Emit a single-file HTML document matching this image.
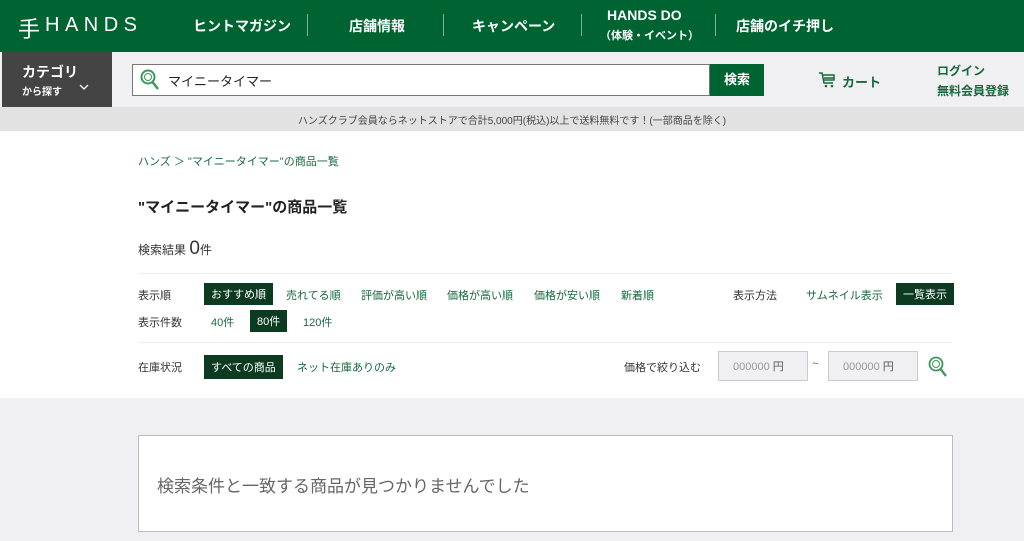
<!DOCTYPE html>
<html><head><meta charset="utf-8"><style>
*{margin:0;padding:0;box-sizing:border-box}
body{width:1024px;height:541px;overflow:hidden;font-family:"Liberation Sans","Noto Sans CJK JP",sans-serif;background:#f0f0f2;position:relative;color:#333}
.a{position:absolute;white-space:nowrap}
.hd{left:0;top:0;width:1024px;height:52px;background:#006432}
.nav{color:#fff;font-size:14px;font-weight:bold}
.sep{width:1px;height:22px;background:#7fb197;top:14px}
.bar2{left:0;top:52px;width:1024px;height:55px;background:#f0f0f2}
.g{color:#16693d;font-size:11px}
.chip{background:#0c3b22;color:#fff;font-size:11px;padding:0 7px;height:22px;line-height:24px}
.lb{font-size:11px;color:#333}
</style></head><body>
<div class="a hd"></div>
<div class="a" style="left:18px;top:12px;color:#fff;font-size:22px;font-family:'Liberation Serif',serif">&#x624B;</div>
<div class="a" style="left:45px;top:14px;color:#fff;font-size:20px;letter-spacing:5.5px">HANDS</div>
<div class="a nav" style="left:193px;top:16px">ヒントマガジン</div>
<div class="a sep" style="left:307px"></div>
<div class="a nav" style="left:349px;top:16px">店舗情報</div>
<div class="a sep" style="left:443px"></div>
<div class="a nav" style="left:472px;top:16px">キャンペーン</div>
<div class="a sep" style="left:581px"></div>
<div class="a nav" style="left:607px;top:7px">HANDS DO</div>
<div class="a" style="left:600px;top:27px;color:#fff;font-size:11px;font-weight:bold">（体験・イベント）</div>
<div class="a sep" style="left:715px"></div>
<div class="a nav" style="left:736px;top:16px">店舗のイチ押し</div>
<div class="a bar2"></div>
<div class="a" style="left:2px;top:52px;width:110px;height:55px;background:#444"></div>
<div class="a" style="left:22px;top:62px;color:#fff;font-size:14px;font-weight:bold">カテゴリ</div>
<div class="a" style="left:22px;top:83px;color:#fff;font-size:10px;font-weight:bold">から探す</div>
<svg class="a" style="left:79px;top:83px" width="10" height="8" viewBox="0 0 10 8"><path d="M1 2l4 4 4-4" fill="none" stroke="#fff" stroke-width="1.3"/></svg>
<div class="a" style="left:132px;top:64px;width:578px;height:32px;background:#fff;border:1px solid #777"></div>
<svg class="a" style="left:139px;top:68px" width="22" height="24" viewBox="0 0 22 24"><circle cx="9" cy="9" r="6.5" fill="none" stroke="#3a9a5a" stroke-width="2"/><circle cx="9" cy="9" r="3.5" fill="none" stroke="#3a9a5a" stroke-width="1"/><line x1="13.5" y1="14" x2="19" y2="21" stroke="#3a9a5a" stroke-width="2.5"/></svg>
<div class="a" style="left:168px;top:71px;font-size:13px;color:#222">マイニータイマー</div>
<div class="a" style="left:710px;top:64px;width:54px;height:32px;background:#006432;color:#fff;font-size:13px;font-weight:bold;text-align:center;line-height:32px">検索</div>
<svg class="a" style="left:818px;top:71px" width="18" height="18" viewBox="0 0 18 18"><path d="M1 2h3l2 10h9M5 4h11v5H6M6 7h10" fill="none" stroke="#16693d" stroke-width="1.5"/><circle cx="8" cy="15" r="1.3" fill="#16693d"/><circle cx="14" cy="15" r="1.3" fill="#16693d"/></svg>
<div class="a" style="left:842px;top:72px;font-size:13px;font-weight:bold;color:#16693d">カート</div>
<div class="a" style="left:937px;top:62px;font-size:12px;font-weight:bold;color:#16693d">ログイン</div>
<div class="a" style="left:937px;top:82px;font-size:12px;font-weight:bold;color:#16693d">無料会員登録</div>
<div class="a" style="left:0;top:107px;width:1024px;height:24px;background:#e2e2e2"></div>
<div class="a" style="left:0;top:112px;width:1024px;text-align:center;font-size:10px;color:#444">ハンズクラブ会員ならネットストアで合計5,000円(税込)以上で送料無料です！(一部商品を除く)</div>
<div class="a" style="left:0;top:131px;width:1024px;height:267px;background:#fff"></div>
<div class="a g" style="left:138px;top:153px">ハンズ ＞ "マイニータイマー"の商品一覧</div>
<div class="a" style="left:138px;top:196px;font-size:15px;font-weight:bold;color:#222">"マイニータイマー"の商品一覧</div>
<div class="a" style="left:138px;top:238px;font-size:12px">検索結果 <span style="font-size:19px">0</span>件</div>
<div class="a" style="left:138px;top:273px;width:814px;height:1px;background:#eee"></div>
<div class="a lb" style="left:138px;top:287px">表示順</div>
<div class="a chip" style="left:204px;top:283px">おすすめ順</div>
<div class="a g" style="left:286px;top:287px">売れてる順</div>
<div class="a g" style="left:361px;top:287px">評価が高い順</div>
<div class="a g" style="left:447px;top:287px">価格が高い順</div>
<div class="a g" style="left:534px;top:287px">価格が安い順</div>
<div class="a g" style="left:621px;top:287px">新着順</div>
<div class="a lb" style="left:733px;top:287px">表示方法</div>
<div class="a g" style="left:806px;top:287px">サムネイル表示</div>
<div class="a chip" style="left:896px;top:283px">一覧表示</div>
<div class="a lb" style="left:138px;top:314px">表示件数</div>
<div class="a g" style="left:211px;top:314px">40件</div>
<div class="a chip" style="left:250px;top:310px">80件</div>
<div class="a g" style="left:303px;top:314px">120件</div>
<div class="a" style="left:138px;top:342px;width:814px;height:1px;background:#eee"></div>
<div class="a lb" style="left:138px;top:359px">在庫状況</div>
<div class="a chip" style="left:204px;top:355px;height:24px;line-height:26px">すべての商品</div>
<div class="a g" style="left:297px;top:359px">ネット在庫ありのみ</div>
<div class="a lb" style="left:624px;top:359px">価格で絞り込む</div>
<div class="a" style="left:718px;top:351px;width:90px;height:30px;background:#f0f0f2;border:1px solid #ccc;font-size:11px;color:#999;line-height:30px;padding-left:14px">000000 <span style="color:#555">円</span></div>
<div class="a" style="left:812px;top:358px;font-size:11px;color:#666">~</div>
<div class="a" style="left:828px;top:351px;width:90px;height:30px;background:#f0f0f2;border:1px solid #ccc;font-size:11px;color:#999;line-height:30px;padding-left:14px">000000 <span style="color:#555">円</span></div>
<svg class="a" style="left:927px;top:355px" width="22" height="24" viewBox="0 0 22 24"><circle cx="9" cy="9" r="6.5" fill="none" stroke="#3a9a5a" stroke-width="1.8"/><circle cx="9" cy="9" r="3.5" fill="none" stroke="#3a9a5a" stroke-width="1"/><line x1="13.5" y1="14" x2="19" y2="21" stroke="#3a9a5a" stroke-width="2.3"/></svg>
<div class="a" style="left:138px;top:435px;width:815px;height:97px;background:#fff;border:1px solid #bbb"></div>
<div class="a" style="left:157px;top:472px;font-size:17px;color:#666">検索条件と一致する商品が見つかりませんでした</div>
</body></html>
